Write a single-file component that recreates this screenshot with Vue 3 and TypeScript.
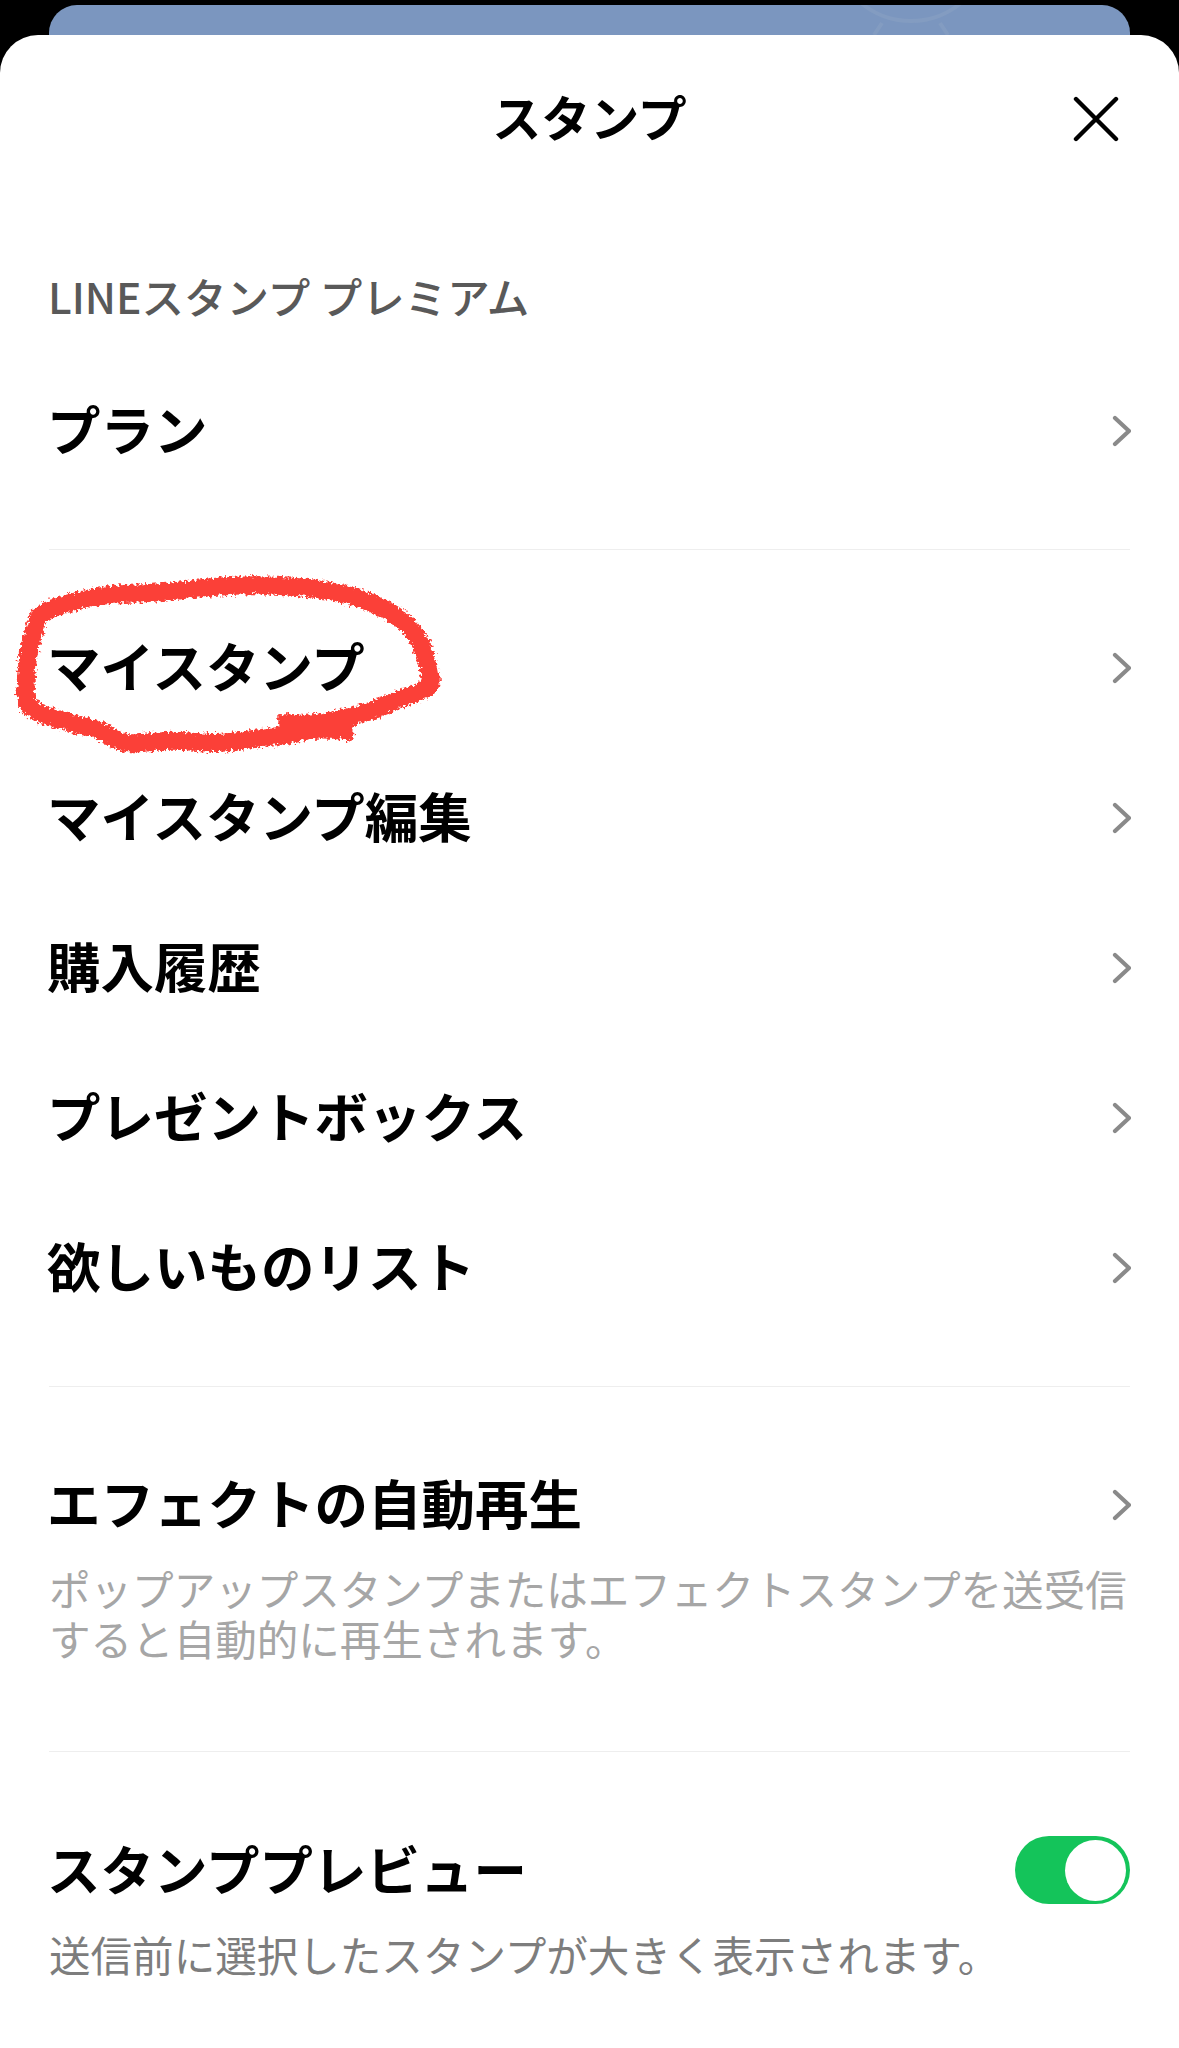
<script setup lang="ts">
interface Row { label: string }
const mainRows: Row[] = [
  { label: 'マイスタンプ' },
  { label: 'マイスタンプ編集' },
  { label: '購入履歴' },
  { label: 'プレゼントボックス' },
  { label: '欲しいものリスト' },
]

// Centre line of the hand-drawn red circle, in 1/3 px units.
const pts: [number, number][] = [
  [1060, 578], [950, 572], [840, 590], [760, 600], [650, 612], [520, 605], [380, 612],
  [300, 575], [200, 548], [105, 515], [78, 470], [85, 350], [105, 270], [135, 218],
  [300, 172], [480, 160], [700, 140], [900, 145], [1050, 170], [1180, 225], [1255, 300],
  [1292, 420], [1270, 452], [1200, 480], [1100, 520], [950, 552], [835, 552],
]
function smooth(p: [number, number][]): string {
  let d = `M${p[0][0]} ${p[0][1]}`
  for (let i = 0; i < p.length - 1; i++) {
    const a = p[Math.max(i - 1, 0)]
    const b = p[i]
    const c = p[i + 1]
    const e = p[Math.min(i + 2, p.length - 1)]
    d += `C${b[0] + (c[0] - a[0]) / 6} ${b[1] + (c[1] - a[1]) / 6} ${c[0] - (e[0] - b[0]) / 6} ${c[1] - (e[1] - b[1]) / 6} ${c[0]} ${c[1]}`
  }
  return d
}
const scribblePath = smooth(pts)
</script>

<template>
  <div class="page">
    <div class="peek">
      <svg class="peek-art" viewBox="0 0 160 30" fill="none" stroke="#839cc1" stroke-width="4">
        <circle cx="79" cy="-62" r="78" />
        <path d="M42 30 50 18M116 30 108 18" />
      </svg>
    </div>
    <main class="sheet">
      <header class="head">
        <h1 class="title">スタンプ</h1>
        <button class="close" aria-label="閉じる">
          <svg viewBox="0 0 46 46" width="46" height="46" fill="none" stroke="#000" stroke-width="4.4" stroke-linecap="round">
            <path d="M3 3 43 43M43 3 3 43" />
          </svg>
        </button>
      </header>

      <section class="group first">
        <div class="label">LINEスタンプ プレミアム</div>
        <div class="row">
          <span>プラン</span>
          <svg class="chev" viewBox="0 0 20 32" fill="none" stroke="#8a8a8a" stroke-width="4.2" stroke-linecap="round" stroke-linejoin="round"><path d="M4 3 18 16 4 29" /></svg>
        </div>
      </section>

      <section class="group list">
        <div v-for="r in mainRows" :key="r.label" class="row">
          <span>{{ r.label }}</span>
          <svg class="chev" viewBox="0 0 20 32" fill="none" stroke="#8a8a8a" stroke-width="4.2" stroke-linecap="round" stroke-linejoin="round"><path d="M4 3 18 16 4 29" /></svg>
        </div>
        <svg class="scribble" viewBox="0 0 1440 720" fill="none">
          <defs>
            <filter id="rough" x="-5%" y="-10%" width="110%" height="120%">
              <feTurbulence type="fractalNoise" baseFrequency="0.11" numOctaves="3" seed="7" result="n" />
              <feDisplacementMap in="SourceGraphic" in2="n" scale="26" xChannelSelector="R" yChannelSelector="G" />
              <feGaussianBlur stdDeviation="1.6" />
            </filter>
          </defs>
          <path
            filter="url(#rough)"
            stroke="#fb3f38"
            stroke-width="54"
            stroke-linecap="butt"
            stroke-linejoin="round"
            :d="scribblePath"
          />
        </svg>
      </section>

      <section class="group effect">
        <div class="row compact">
          <span>エフェクトの自動再生</span>
          <svg class="chev" viewBox="0 0 20 32" fill="none" stroke="#8a8a8a" stroke-width="4.2" stroke-linecap="round" stroke-linejoin="round"><path d="M4 3 18 16 4 29" /></svg>
        </div>
        <p class="desc">ポップアップスタンプまたはエフェクトスタンプを送受信<br />すると自動的に再生されます。</p>
      </section>

      <section class="group preview">
        <div class="row compact">
          <span>スタンププレビュー</span>
          <div class="toggle"><div class="knob"></div></div>
        </div>
        <p class="desc dark">送信前に選択したスタンプが大きく表示されます。</p>
      </section>
    </main>
  </div>
</template>

<style>
html, body { margin: 0; background: #000; }
</style>

<style scoped>
.page {
  width: 1179px;
  height: 2048px;
  overflow: hidden;
  background: #000;
  padding-top: 5px;
  box-sizing: border-box;
  font-family: "Noto Sans CJK JP", "Liberation Sans", sans-serif;
  color: #000;
}
.peek {
  position: relative;
  height: 60px;
  margin: 0 49px;
  background: #7b96bf;
  border-radius: 28px 28px 0 0;
  overflow: hidden;
}
.peek-art {
  position: absolute;
  left: 783px;
  top: 0;
  width: 160px;
  height: 30px;
}
.sheet {
  position: relative;
  margin-top: -30px;
  height: 2013px;
  background: #fff;
  border-radius: 38px 38px 0 0;
  padding: 0 49px;
  box-sizing: border-box;
}
.head {
  position: relative;
  height: 166px;
  display: flex;
  align-items: center;
  justify-content: center;
}
.title {
  margin: 0 0 4px;
  font-size: 49px;
  line-height: 60px;
  font-weight: 700;
}
.close {
  position: absolute;
  right: 11px;
  top: 61px;
  width: 46px;
  height: 46px;
  padding: 0;
  border: 0;
  background: none;
  display: flex;
}
.group { position: relative; }
.group + .group { border-top: 1px solid #eeeeee; }
.first { padding: 70px 0 44px; }
.list { padding: 42px 0 44px; }
.effect { padding: 58px 0 88px; }
.preview { padding: 59px 0 0; }
.label {
  font-size: 42.5px;
  line-height: 56px;
  font-weight: 500;
  color: #595959;
  margin: -3px 0 31px -1px;
}
.row {
  height: 150px;
  display: flex;
  align-items: center;
  justify-content: space-between;
  font-size: 53.5px;
  font-weight: 700;
}
.row > span {
  margin-left: -2px;
  padding-bottom: 5px;
}
.row.compact { height: 118px; }
.chev {
  width: 20px;
  height: 32px;
  flex: none;
  margin: 2px -1px 0 0;
}
.desc {
  margin: 0;
  font-size: 41.55px;
  line-height: 50px;
  color: #a6a6a6;
  white-space: nowrap;
}
.desc.dark { color: #7d7d7d; }
.toggle {
  width: 115px;
  height: 68px;
  border-radius: 34px;
  background: #14c45a;
  display: flex;
  align-items: center;
  justify-content: flex-end;
  padding-right: 4px;
  box-sizing: border-box;
}
.knob {
  width: 61px;
  height: 61px;
  border-radius: 50%;
  background: #fff;
}
.scribble {
  position: absolute;
  left: -49px;
  top: -11px;
  width: 480px;
  height: 240px;
  overflow: visible;
}
</style>
